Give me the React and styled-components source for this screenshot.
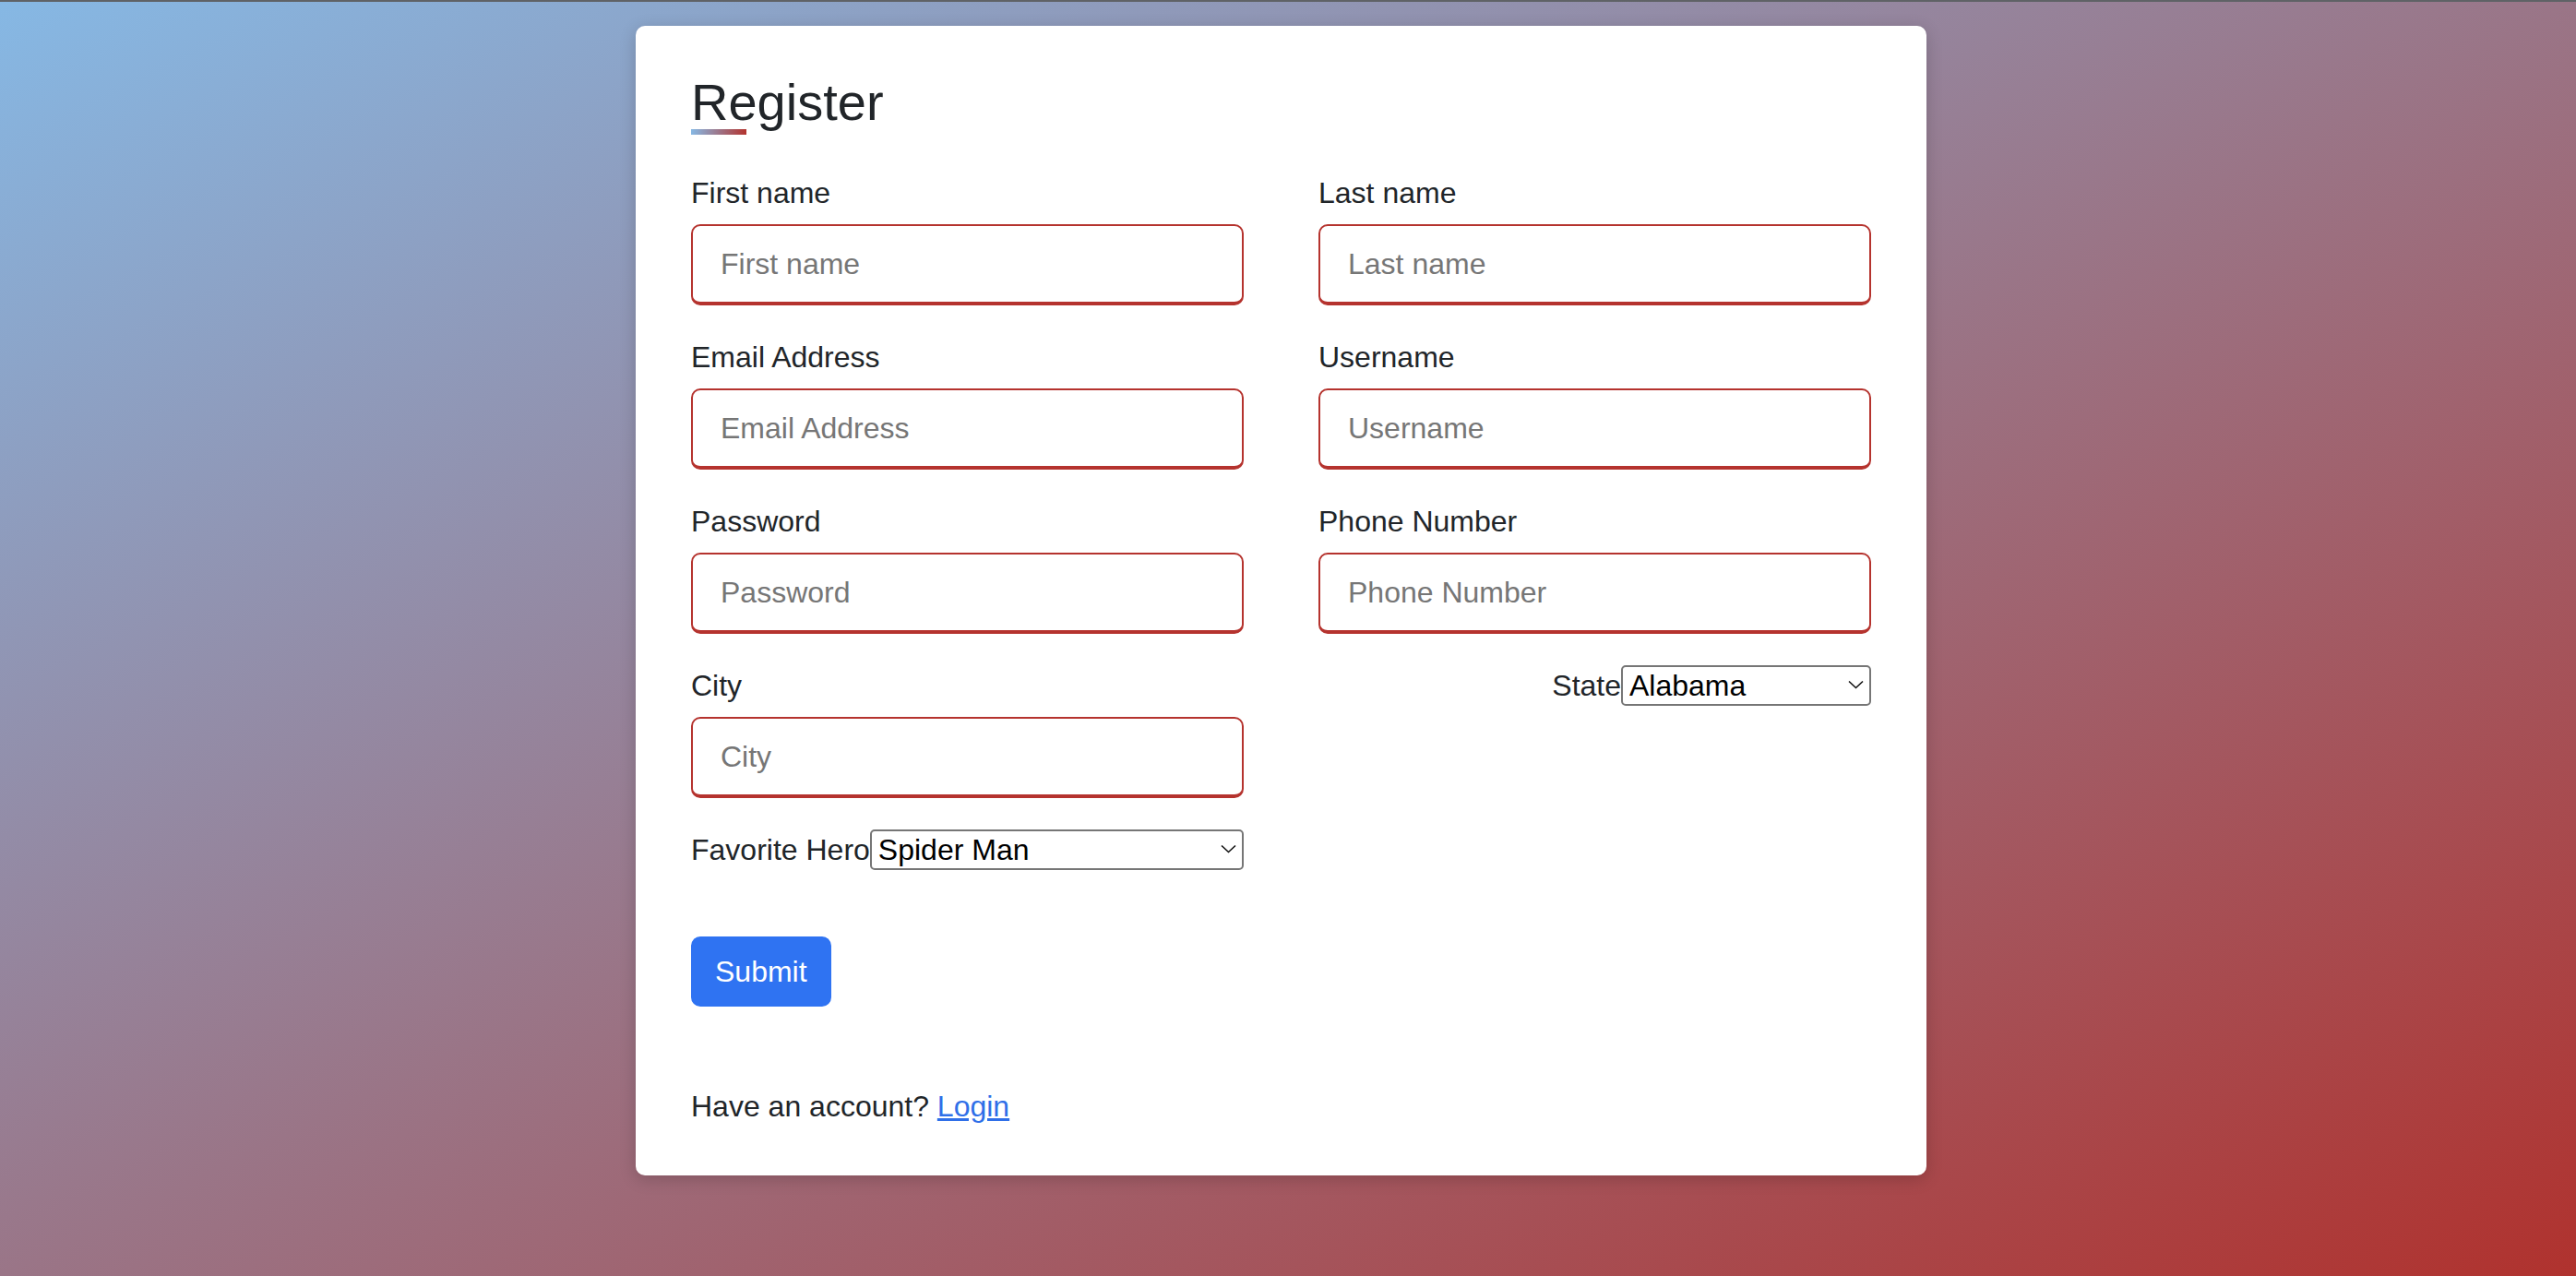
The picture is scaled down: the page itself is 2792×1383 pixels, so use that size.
import React from 'react';
import styled, { createGlobalStyle } from 'styled-components';

const GlobalStyle = createGlobalStyle`
  * {
    box-sizing: border-box;
  }
  body {
    margin: 0;
    font-family: 'Liberation Sans', Arial, sans-serif;
  }
`;

const Page = styled.main`
  min-height: 100vh;
  border-top: 2px solid #5f6266;
  background: linear-gradient(to bottom right, #86b8e4 0%, #9a7587 50%, #b0322e 100%);
  padding: 26px 15px 0 0;
  display: flex;
  justify-content: center;
  align-items: flex-start;
`;

const Card = styled.section`
  width: 1399px;
  background-color: #fff;
  border-radius: 10px;
  padding: 54px 60px 51px;
  box-shadow: 0 4px 18px rgba(0, 0, 0, 0.18);
  color: #212529;
`;

const Title = styled.h1`
  margin: 0;
  font-size: 56px;
  font-weight: 400;
  line-height: 58px;
  color: #212529;
`;

const TitleBar = styled.div`
  width: 60px;
  height: 6px;
  background: linear-gradient(to right, #86b8e4, #b3332e);
`;

const Form = styled.form`
  margin-top: 39px;
`;

const Grid = styled.div`
  display: grid;
  grid-template-columns: 1fr 1fr;
  column-gap: 81px;
  row-gap: 32px;
`;

const Field = styled.div`
  display: flex;
  flex-direction: column;
`;

const Label = styled.label`
  font-size: 32px;
  line-height: 48px;
  margin-bottom: ${(p) => (p.$inline ? '0' : '10px')};
  white-space: nowrap;
`;

const Input = styled.input`
  height: 88px;
  width: 100%;
  border: 2px solid #b5332e;
  border-bottom-width: 4px;
  border-radius: 10px;
  padding: 0 30px;
  font-family: inherit;
  font-size: 32px;
  color: #212529;
  outline: none;
  &::placeholder {
    color: #767676;
  }
`;

const InlineRow = styled.div`
  display: flex;
  align-items: center;
  justify-content: ${(p) => (p.$end ? 'flex-end' : 'flex-start')};
  align-self: start;
  height: ${(p) => (p.$end ? '48px' : 'auto')};
`;

const SelectWrap = styled.div`
  position: relative;
  width: ${(p) => p.$width || 'auto'};
  flex: ${(p) => (p.$grow ? '1' : 'none')};
  height: 44px;
`;

const Select = styled.select`
  appearance: none;
  width: 100%;
  height: 44px;
  border: 2px solid #767676;
  border-radius: 5px;
  background: #fff;
  padding: 0 30px 0 7px;
  font-family: inherit;
  font-size: 32px;
  color: #000;
  outline: none;
`;

const Chevron = styled.svg`
  position: absolute;
  right: 8px;
  top: 16px;
  width: 17px;
  height: 10px;
  pointer-events: none;
`;

const SubmitButton = styled.button`
  margin-top: 70px;
  padding: 12px 24px;
  font-family: inherit;
  font-size: 32px;
  line-height: 48px;
  color: #fff;
  background-color: #2f73f2;
  border: 2px solid #2f73f2;
  border-radius: 10px;
  cursor: pointer;
`;

const Footer = styled.p`
  margin: 84px 0 0;
  font-size: 32px;
  line-height: 48px;
`;

const LoginLink = styled.a`
  color: #2f6fe8;
  text-decoration: underline;
`;

const fields = [
  ['First name', 'Last name'],
  ['Email Address', 'Username'],
  ['Password', 'Phone Number'],
];

const Dropdown = ({ value, options, width, grow }) => (
  <SelectWrap $width={width} $grow={grow}>
    <Select defaultValue={value}>
      {options.map((o) => (
        <option key={o}>{o}</option>
      ))}
    </Select>
    <Chevron viewBox="0 0 17 10">
      <path d="M1 1.5 L8.5 8.5 L16 1.5" fill="none" stroke="#111" strokeWidth="1.6" />
    </Chevron>
  </SelectWrap>
);

const App = () => {
  return (
    <Page>
      <GlobalStyle />
      <Card>
        <Title>Register</Title>
        <TitleBar />
        <Form onSubmit={(e) => e.preventDefault()}>
          <Grid>
            {fields.flat().map((name) => (
              <Field key={name}>
                <Label>{name}</Label>
                <Input
                  type={name === 'Password' ? 'password' : 'text'}
                  placeholder={name}
                />
              </Field>
            ))}
            <Field>
              <Label>City</Label>
              <Input placeholder="City" />
            </Field>
            <InlineRow $end>
              <Label $inline>State</Label>
              <Dropdown
                value="Alabama"
                options={['Alabama', 'Alaska', 'Arizona', 'Arkansas', 'California']}
                width="271px"
              />
            </InlineRow>
            <InlineRow>
              <Label $inline>Favorite Hero</Label>
              <Dropdown
                value="Spider Man"
                options={['Spider Man', 'Iron Man', 'Batman', 'Superman']}
                grow
              />
            </InlineRow>
          </Grid>
          <SubmitButton type="submit">Submit</SubmitButton>
        </Form>
        <Footer>
          Have an account? <LoginLink href="#">Login</LoginLink>
        </Footer>
      </Card>
    </Page>
  );
};

export default App;
